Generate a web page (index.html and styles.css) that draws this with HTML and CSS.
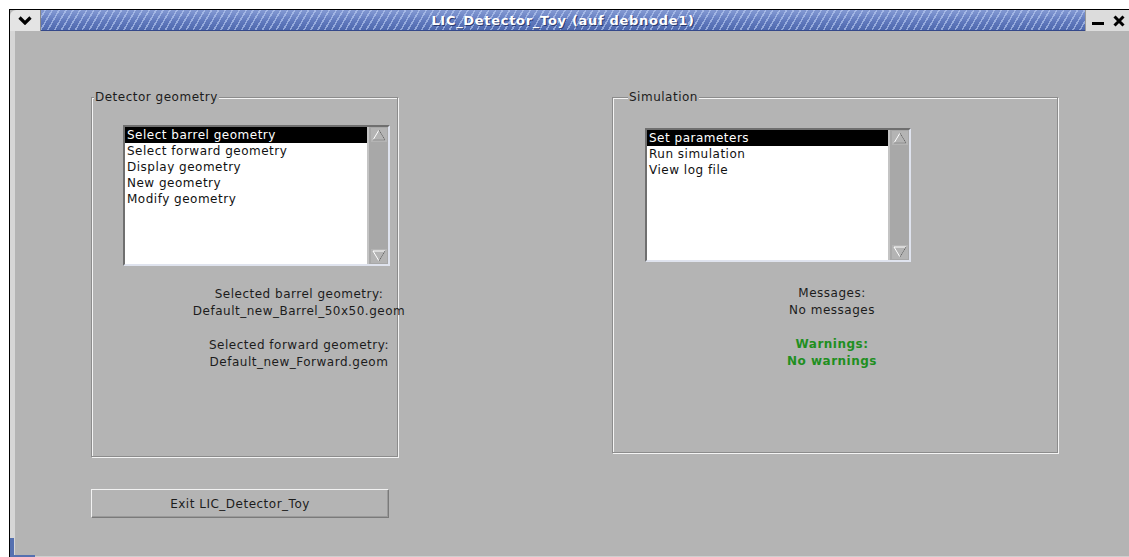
FILE: index.html
```html
<!DOCTYPE html>
<html>
<head>
<meta charset="utf-8">
<title>LIC_Detector_Toy</title>
<link rel="stylesheet" href="styles.css">
</head>
<body>
<div class="window">
  <div class="titlebar">
    <div class="tb-menu">
      <svg width="14" height="9" viewBox="0 0 14 9"><path d="M1.5 1.5 L7 7 L12.5 1.5" fill="none" stroke="#000" stroke-width="3.2"/></svg>
    </div>
    <div class="tb-title">LIC_Detector_Toy (auf debnode1)</div>
    <div class="tb-buttons">
      <span class="tb-min"></span>
      <svg class="tb-close" width="12" height="12" viewBox="0 0 12 12"><path d="M1.5 1.5 L10.5 10.5 M10.5 1.5 L1.5 10.5" stroke="#000" stroke-width="3"/></svg>
    </div>
  </div>
  <div class="client">
    <div class="groups">
      <div class="group group-detector">
        <span class="group-title">Detector geometry</span>
        <div class="listbox list-detector">
          <ul class="list-items">
            <li class="selected">Select barrel geometry</li>
            <li>Select forward geometry</li>
            <li>Display geometry</li>
            <li>New geometry</li>
            <li>Modify geometry</li>
          </ul>
          <div class="scrollbar">
            <svg class="arrow" width="16" height="14" viewBox="0 0 16 14"><path d="M2 12 L8 2 L14 12 Z" fill="#b4b4b4" stroke="#fff" stroke-width="1"/><path d="M2 12 L14 12 L8 2" fill="none" stroke="#6a6a6a" stroke-width="1"/></svg>
            <svg class="arrow" width="16" height="14" viewBox="0 0 16 14"><path d="M2 2 L8 12 L14 2 Z" fill="#b4b4b4" stroke="#fff" stroke-width="1"/><path d="M8 12 L14 2" fill="none" stroke="#6a6a6a" stroke-width="1"/></svg>
          </div>
        </div>
        <div class="info info-detector">
          <p>Selected barrel geometry:<br>Default_new_Barrel_50x50.geom</p>
          <p>Selected forward geometry:<br>Default_new_Forward.geom</p>
        </div>
      </div>
      <div class="group group-sim">
        <span class="group-title">Simulation</span>
        <div class="listbox list-sim">
          <ul class="list-items">
            <li class="selected">Set parameters</li>
            <li>Run simulation</li>
            <li>View log file</li>
          </ul>
          <div class="scrollbar">
            <svg class="arrow" width="16" height="14" viewBox="0 0 16 14"><path d="M2 12 L8 2 L14 12 Z" fill="#b4b4b4" stroke="#fff" stroke-width="1"/><path d="M2 12 L14 12 L8 2" fill="none" stroke="#6a6a6a" stroke-width="1"/></svg>
            <svg class="arrow" width="16" height="14" viewBox="0 0 16 14"><path d="M2 2 L8 12 L14 2 Z" fill="#b4b4b4" stroke="#fff" stroke-width="1"/><path d="M8 12 L14 2" fill="none" stroke="#6a6a6a" stroke-width="1"/></svg>
          </div>
        </div>
        <div class="info info-sim">
          <p>Messages:<br>No messages</p>
          <p class="warn">Warnings:<br>No warnings</p>
        </div>
      </div>
    </div>
    <button class="exit-btn">Exit LIC_Detector_Toy</button>
  </div>
</div>
</body>
</html>
```
FILE: styles.css
```css
html, body {
  margin: 0;
  padding: 0;
  background: #ffffff;
  overflow: hidden;
}

body {
  font-family: "DejaVu Sans", "Liberation Sans", sans-serif;
  font-size: 12px;
  letter-spacing: 0.5px;
  color: #1c1c1c;
}

.window {
  margin: 9px 0 0 9px;
  height: 548px;
  border-top: 1px solid #000;
  border-left: 1px solid #000;
  display: flex;
  flex-direction: column;
  background: #b4b4b4;
  position: relative;
}

/* bottom-left resize corner of the frame */
.window::after {
  content: "";
  position: absolute;
  left: 0;
  bottom: 0;
  width: 25px;
  height: 20px;
  border-left: 4px solid #5570b0;
  border-bottom: 3px solid #5570b0;
  box-sizing: border-box;
}

.titlebar {
  height: 21px;
  display: flex;
  flex-shrink: 0;
}

.tb-menu {
  width: 31px;
  background: #e4e4e4;
  border-top-left-radius: 6px;
  display: flex;
  align-items: center;
  justify-content: center;
  border-right: 1px solid #8a8a8a;
  box-sizing: border-box;
}

.tb-title {
  flex: 1;
  display: flex;
  align-items: center;
  justify-content: center;
  color: #fff;
  font-weight: bold;
  font-size: 13px;
  letter-spacing: 0.7px;
  text-shadow: 1px 1px 0 #2a3a70;
  background:
    repeating-linear-gradient(120deg, rgba(255,255,255,0) 0 3px, rgba(190,208,245,0.6) 3px 4.5px, rgba(255,255,255,0) 4.5px 6px),
    linear-gradient(#849ad3, #6079bd 55%, #4f69ae);
  border-bottom: 1px solid #34488a;
  box-sizing: border-box;
}

.tb-buttons {
  width: 44px;
  background: #dcdcdc;
  display: flex;
  align-items: center;
  justify-content: space-between;
  padding: 0 4px 0 6px;
  box-sizing: border-box;
  border-left: 1px solid #9a9a9a;
}

.tb-min {
  width: 12px;
  height: 3px;
  background: #000;
  margin-top: 6px;
}

.tb-close {
  margin-top: 1px;
}

.client {
  flex: 1;
  border-left: 5px solid #d6d6d6;
  border-bottom: 2px solid #cfcfcf;
  padding: 66px 0 0 76px;
  display: flex;
  flex-direction: column;
  align-items: flex-start;
}

.groups {
  display: flex;
  align-items: flex-start;
  gap: 214px;
}

.group {
  position: relative;
  border: 1px solid #8c8c8c;
  box-shadow: inset 1px 1px 0 #f4f4f4, 1px 1px 0 #f4f4f4;
  box-sizing: border-box;
}

.group-detector {
  width: 307px;
  height: 360px;
  padding: 27px 0 0 31px;
}

.group-sim {
  width: 446px;
  height: 356px;
  padding: 30px 0 0 32px;
}

.group-title {
  position: absolute;
  top: -9px;
  left: 2px;
  background: #b4b4b4;
  padding: 0 1px;
  line-height: 16px;
}

.group-sim .group-title {
  left: 15px;
}

.listbox {
  display: flex;
  background: #fff;
  border: 2px solid;
  border-color: #6f6f6f #dfe3ee #dfe3ee #6f6f6f;
  box-sizing: border-box;
}

.list-detector {
  width: 267px;
  height: 141px;
}

.list-sim {
  width: 266px;
  height: 134px;
}

.list-items {
  flex: 1;
  list-style: none;
  margin: 0;
  padding: 0;
}

.list-items li {
  height: 16px;
  line-height: 16px;
  padding-left: 2px;
  color: #111;
  white-space: nowrap;
}

.list-items li.selected {
  background: #000;
  color: #fff;
}

.scrollbar {
  width: 21px;
  background: #a8a8a8;
  border-left: 2px solid #c4c4c4;
  box-sizing: border-box;
  display: flex;
  flex-direction: column;
  justify-content: space-between;
  align-items: center;
  padding: 1px 0 1px;
}

.arrow {
  display: block;
  background: #b4b4b4;
}

.info {
  text-align: center;
  line-height: 17px;
}

.info p {
  margin: 0 0 17px 0;
}

.info-detector {
  width: 260px;
  margin: 20px 0 0 46px;
}

.info-sim {
  width: 200px;
  margin: 23px 0 0 87px;
}

.warn {
  color: #1f8f1f;
  font-weight: bold;
}

.exit-btn {
  margin-top: 32px;
  width: 298px;
  height: 29px;
  background: #b4b4b4;
  font-family: "DejaVu Sans", "Liberation Sans", sans-serif;
  font-size: 12px;
  letter-spacing: 0.5px;
  color: #1c1c1c;
  border: 1px solid;
  border-color: #f2f2f2 #7a7a7a #7a7a7a #f2f2f2;
  box-shadow: inset -1px -1px 0 #9a9a9a;
  padding: 0;
}
```
